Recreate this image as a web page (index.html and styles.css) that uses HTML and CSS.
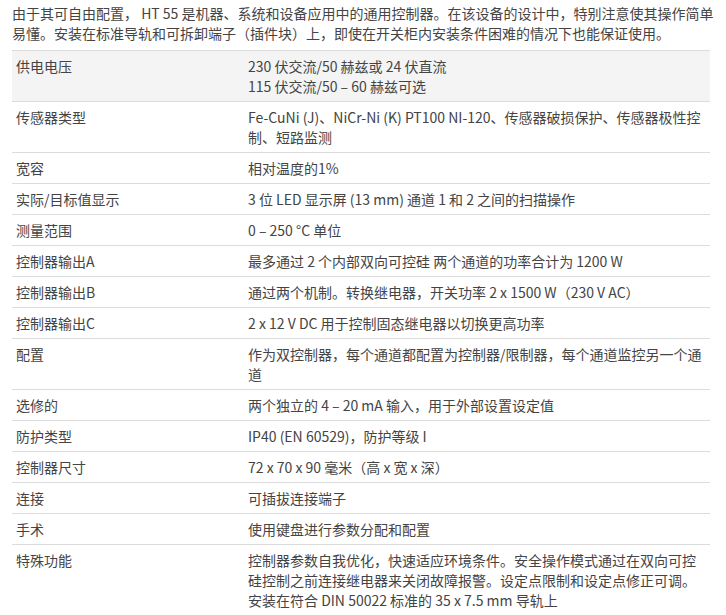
FILE: index.html
```html
<!DOCTYPE html>
<html lang="zh-CN">
<head>
<meta charset="utf-8">
<link rel="stylesheet" href="styles.css">
</head>
<body>
<div class="page">
  <p class="intro">由于其可自由配置， HT 55 是机器、系统和设备应用中的通用控制器。在该设备的设计中，特别注意使其操作简单<br>易懂。安装在标准导轨和可拆卸端子（插件块）上，即使在开关柜内安装条件困难的情况下也能保证使用。</p>
  <table class="specs">
    <tr class="hl"><td class="k">供电电压</td><td class="v">230 伏交流/50 赫兹或 24 伏直流<br>115 伏交流/50 – 60 赫兹可选</td></tr>
    <tr><td class="k">传感器类型</td><td class="v">Fe-CuNi (J)、NiCr-Ni (K) PT100 NI-120、传感器破损保护、传感器极性控<br>制、短路监测</td></tr>
    <tr><td class="k">宽容</td><td class="v">相对温度的1%</td></tr>
    <tr><td class="k">实际/目标值显示</td><td class="v">3 位 LED 显示屏 (13 mm) 通道 1 和 2 之间的扫描操作</td></tr>
    <tr><td class="k">测量范围</td><td class="v">0 – 250 °C 单位</td></tr>
    <tr><td class="k">控制器输出A</td><td class="v">最多通过 2 个内部双向可控硅 两个通道的功率合计为 1200 W</td></tr>
    <tr><td class="k">控制器输出B</td><td class="v">通过两个机制。转换继电器，开关功率 2 x 1500 W（230 V AC）</td></tr>
    <tr><td class="k">控制器输出C</td><td class="v">2 x 12 V DC 用于控制固态继电器以切换更高功率</td></tr>
    <tr><td class="k">配置</td><td class="v">作为双控制器，每个通道都配置为控制器/限制器，每个通道监控另一个通<br>道</td></tr>
    <tr><td class="k">选修的</td><td class="v">两个独立的 4 – 20 mA 输入，用于外部设置设定值</td></tr>
    <tr><td class="k">防护类型</td><td class="v">IP40 (EN 60529)，防护等级 I</td></tr>
    <tr><td class="k">控制器尺寸</td><td class="v">72 x 70 x 90 毫米（高 x 宽 x 深）</td></tr>
    <tr><td class="k">连接</td><td class="v">可插拔连接端子</td></tr>
    <tr><td class="k">手术</td><td class="v">使用键盘进行参数分配和配置</td></tr>
    <tr><td class="k">特殊功能</td><td class="v">控制器参数自我优化，快速适应环境条件。安全操作模式通过在双向可控<br>硅控制之前连接继电器来关闭故障报警。设定点限制和设定点修正可调。<br>安装在符合 DIN 50022 标准的 35 x 7.5 mm 导轨上</td></tr>
  </table>
</div>
</body>
</html>
```
FILE: styles.css
```css
html, body {
  margin: 0;
  padding: 0;
  background: #ffffff;
}
body {
  font-family: "Noto Sans CJK SC", "Noto Sans", sans-serif;
  font-size: 14px;
  line-height: 20px;
  color: #444444;
}
.page {
  padding: 3px 16px 0 12px;
}
.intro {
  margin: 0 0 7px 0;
  white-space: nowrap;
}
.specs {
  width: 698px;
  border-collapse: collapse;
  border-top: 1px solid #dcdcdc;
}
.specs tr {
  border-bottom: 1px solid #dcdcdc;
}
.specs tr:last-child {
  border-bottom: none;
}
.specs tr.hl {
  background: #f4f4f4;
}
.specs td {
  padding: 5px 4px 5px 4px;
  vertical-align: top;
  white-space: nowrap;
}
.specs td.k {
  width: 224px;
}
```
